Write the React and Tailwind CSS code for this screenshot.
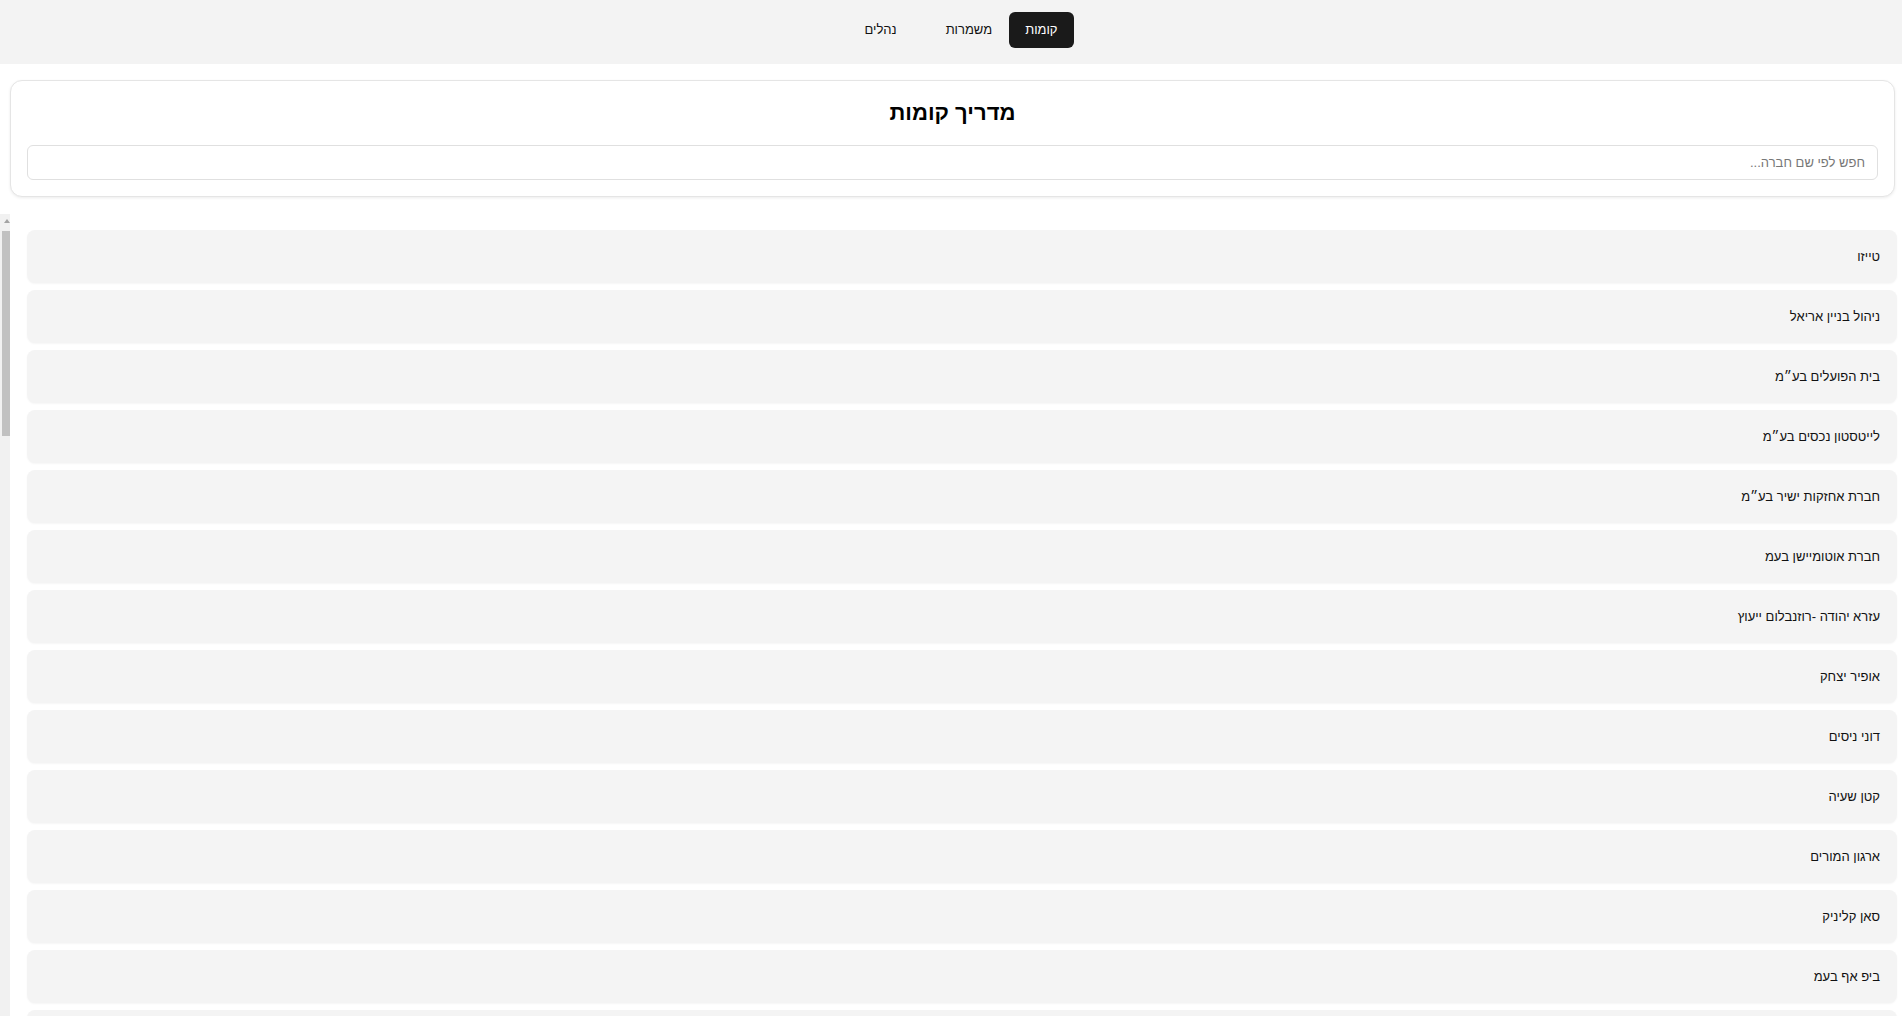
import { useState } from "react";

const companies = [
  "טייזו",
  "ניהול בניין אריאל",
  "בית הפועלים בע״מ",
  "לייטסטון נכסים בע״מ",
  "חברת אחזקות ישיר בע״מ",
  "חברת אוטומיישן בעמ",
  "עזרא יהודה -רוזנבלום ייעוץ",
  "אופיר יצחק",
  "דוני ניסים",
  "קטן שעיה",
  "ארגון המורים",
  "סאן קליניק",
  "ביפ אף בעמ",
  "אלון מערכות מידע",
  "גלעד הנדסה בע״מ",
  "משרד עו״ד כהן ושות׳",
  "רפאל שירותי ניקיון",
  "מרכז רפואי השרון",
  "טל פתרונות ביטוח",
  "אורן יועצים",
  "שחר לוגיסטיקה בע״מ",
  "נוי אדריכלים",
  "פלדמן רואי חשבון",
  "קבוצת אביב",
  "הדר תקשורת",
  "מגדל השקעות",
  "יובל מחשוב בעמ",
  "דקל שיווק",
  "ברק אנרגיה",
  "אלמוג תכנון",
  "סביון נדל״ן",
  "רימון הפקות",
  "גפן סטודיו",
  "אופק הדרכות",
  "נתיב שליחויות",
  "זיו מעבדות",
  "הראל ייעוץ עסקי",
  "לביא אבטחה",
  "שקד מזון בע״מ",
  "תמר קוסמטיקה",
  "עמית פיננסים",
  "פנינה עיצוב",
  "אריה בניה ופיתוח",
  "כרמל דיגיטל",
  "מעיין חינוך",
  "יעל תרגומים",
  "שגיא מהנדסים",
  "ניר טכנולוגיות",
  "רותם סוכנות ביטוח",
  "גל מדיה",
];

function NavButton({ label, active, onClick, className = "" }) {
  return (
    <button
      type="button"
      onClick={onClick}
      className={`h-9 px-4 rounded-md text-[13px] ${
        active ? "bg-[#1a1a1a] text-white" : "text-[#111] hover:bg-[#e8e8e8]"
      } ${className}`}
    >
      {label}
    </button>
  );
}

// thin classic scrollbar look (the list hides its native one)
function FakeScrollbar() {
  return (
    <div className="w-[10px] shrink-0 bg-[#f1f1f1] flex flex-col items-start">
      <div className="h-[17px] w-full flex items-center justify-start pl-[1px] pb-[3px]">
        <div className="w-0 h-0 border-l-[3px] border-r-[3px] border-b-[4px] border-l-transparent border-r-transparent border-b-[#a3a3a3]" />
      </div>
      <div className="w-[8px] h-[205px] bg-[#c1c1c1]" />
    </div>
  );
}

export default function App() {
  const [tab, setTab] = useState("floors");
  const [query, setQuery] = useState("");

  const list = companies.filter((c) => c.includes(query.trim()));

  return (
    <div
      dir="rtl"
      className="h-screen flex flex-col bg-white text-[#111]"
      style={{ fontFamily: '"Liberation Sans", Arial, "DejaVu Sans", sans-serif' }}
    >
      {/* Tabs */}
      <nav className="bg-[#f3f3f3] flex justify-center gap-[1px] pt-3 pb-4 pl-[20px] shrink-0">
        <NavButton label="קומות" active={tab === "floors"} onClick={() => setTab("floors")} />
        <NavButton label="משמרות" active={tab === "shifts"} onClick={() => setTab("shifts")} />
        <NavButton
          label="נהלים"
          active={tab === "rules"}
          onClick={() => setTab("rules")}
          className="ms-4"
        />
      </nav>

      {/* Header card */}
      <div className="mt-4 ml-[10px] mr-[7px] shrink-0 bg-white border border-[#e5e5e5] rounded-xl shadow-[0_1px_3px_rgba(0,0,0,0.08)] p-4">
        <h1 className="text-center text-[22px] leading-8 font-bold text-black">מדריך קומות</h1>
        <input
          type="text"
          value={query}
          onChange={(e) => setQuery(e.target.value)}
          placeholder="חפש לפי שם חברה..."
          className="mt-4 w-full h-[35px] px-3 border border-[#e0e0e0] rounded-md text-[13px] outline-none placeholder:text-[#777]"
        />
      </div>

      {/* Companies list */}
      <div className="flex-1 min-h-0 mt-[17px] flex">
        <div className="flex-1 min-w-0 overflow-y-auto [scrollbar-width:none] pt-4 pb-4 pl-[17px] pr-[5px]">
          <div className="flex flex-col gap-[7px]">
            {list.map((name) => (
              <div
                key={name}
                className="h-[53px] shrink-0 flex items-center px-[17px] bg-[#f4f4f4] rounded-lg shadow-[0_1px_2px_rgba(0,0,0,0.04)] text-[13px] text-[#111] cursor-pointer"
              >
                {name}
              </div>
            ))}
          </div>
        </div>
        <FakeScrollbar />
      </div>
    </div>
  );
}
